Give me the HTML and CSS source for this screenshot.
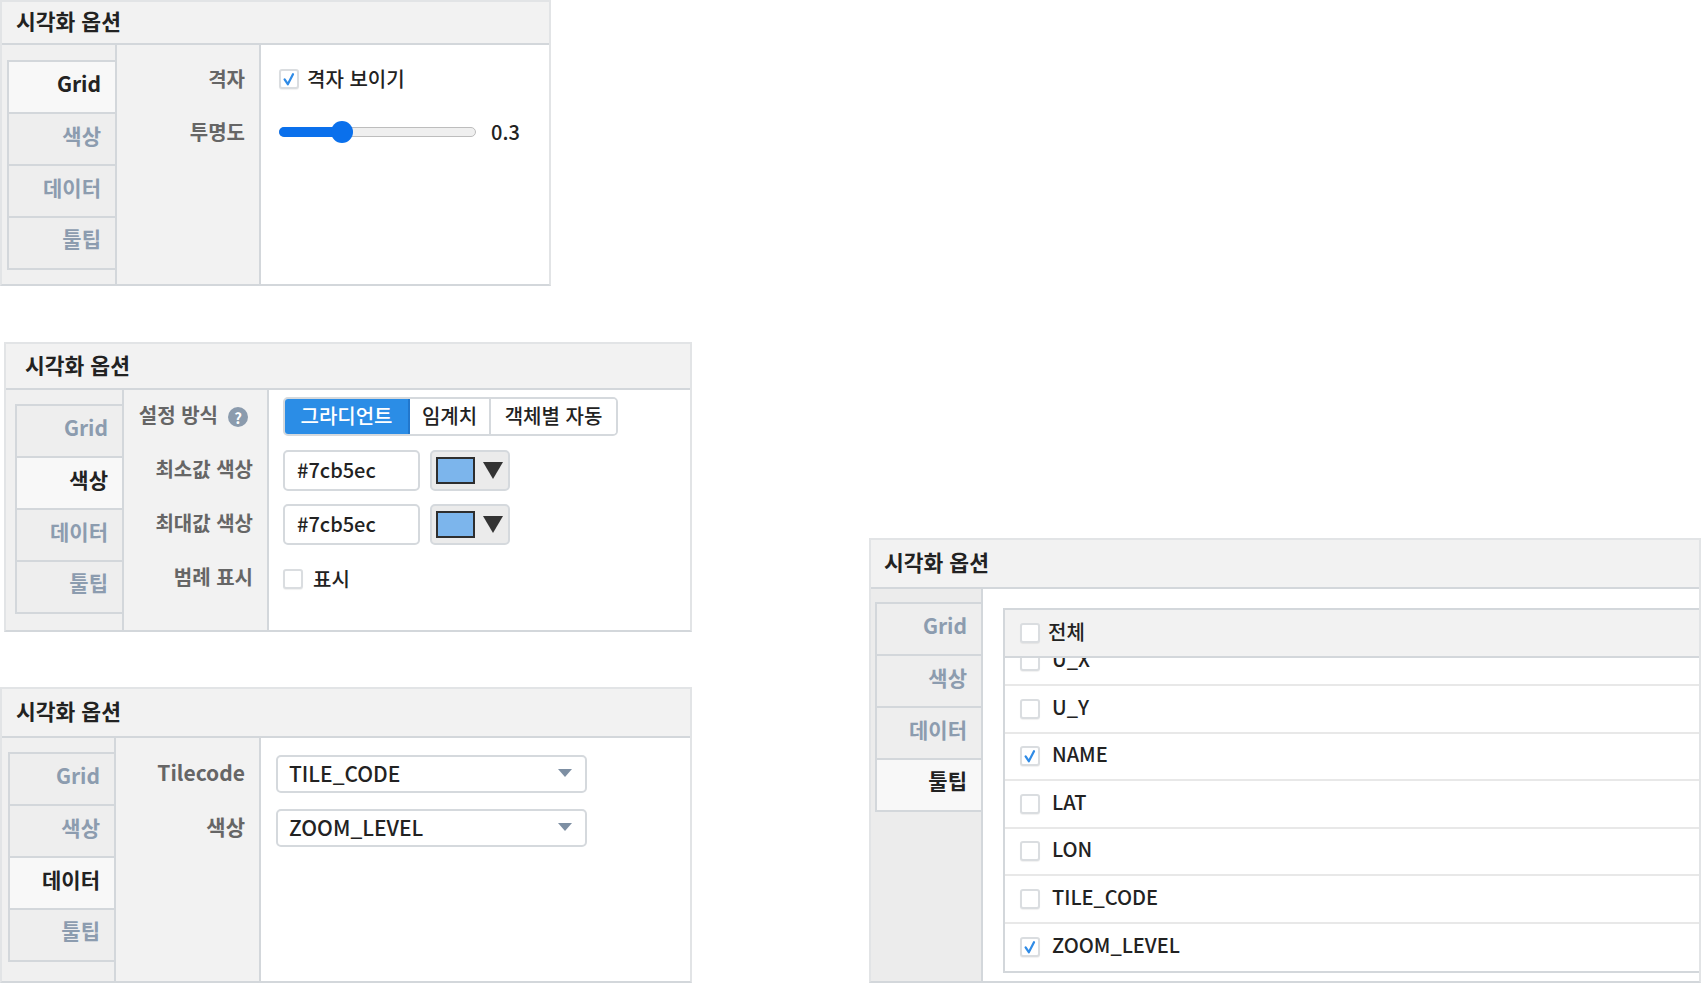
FILE: index.html
```html
<!DOCTYPE html>
<html lang="ko">
<head>
<meta charset="utf-8">
<title>시각화 옵션</title>
<link rel="stylesheet" href="styles.css">
</head>
<body>
<div class="canvas">
  <div class="left-col">

    <section class="panel p1">
      <header class="panel-head">시각화 옵션</header>
      <div class="panel-body">
        <nav class="tabs">
          <div class="tab active">Grid</div>
          <div class="tab">색상</div>
          <div class="tab">데이터</div>
          <div class="tab">툴팁</div>
        </nav>
        <div class="labels">
          <div class="row label">격자</div>
          <div class="row label">투명도</div>
        </div>
        <div class="fields">
          <div class="row field">
            <span class="cb checked"><svg viewBox="0 0 20 20"><path d="M4.5 10.5 L8.5 16.5 L15 4"/></svg></span>
            <span class="txt">격자 보이기</span>
          </div>
          <div class="row field">
            <div class="slider"><div class="slider-fill"></div><div class="slider-thumb"></div></div>
            <span class="txt val">0.3</span>
          </div>
        </div>
      </div>
    </section>

    <section class="panel p2">
      <header class="panel-head">시각화 옵션</header>
      <div class="panel-body">
        <nav class="tabs">
          <div class="tab">Grid</div>
          <div class="tab active">색상</div>
          <div class="tab">데이터</div>
          <div class="tab">툴팁</div>
        </nav>
        <div class="labels">
          <div class="row label label-help">설정 방식<span class="help">?</span></div>
          <div class="row label">최소값 색상</div>
          <div class="row label">최대값 색상</div>
          <div class="row label">범례 표시</div>
        </div>
        <div class="fields">
          <div class="row field">
            <div class="seg">
              <span class="seg-btn on">그라디언트</span>
              <span class="seg-btn s2">임계치</span>
              <span class="seg-btn s3">객체별 자동</span>
            </div>
          </div>
          <div class="row field">
            <span class="hex">#7cb5ec</span>
            <span class="picker"><span class="swatch"></span><span class="tri"></span></span>
          </div>
          <div class="row field">
            <span class="hex">#7cb5ec</span>
            <span class="picker"><span class="swatch"></span><span class="tri"></span></span>
          </div>
          <div class="row field">
            <span class="cb"></span>
            <span class="txt">표시</span>
          </div>
        </div>
      </div>
    </section>

    <section class="panel p3">
      <header class="panel-head">시각화 옵션</header>
      <div class="panel-body">
        <nav class="tabs">
          <div class="tab">Grid</div>
          <div class="tab">색상</div>
          <div class="tab active">데이터</div>
          <div class="tab">툴팁</div>
        </nav>
        <div class="labels">
          <div class="row label">Tilecode</div>
          <div class="row label">색상</div>
        </div>
        <div class="fields">
          <div class="row field">
            <div class="select"><span>TILE_CODE</span><span class="sel-arrow"></span></div>
          </div>
          <div class="row field">
            <div class="select"><span>ZOOM_LEVEL</span><span class="sel-arrow"></span></div>
          </div>
        </div>
      </div>
    </section>

  </div>

  <div class="right-col">
    <section class="panel p4">
      <header class="panel-head">시각화 옵션</header>
      <div class="panel-body">
        <nav class="tabs">
          <div class="tab">Grid</div>
          <div class="tab">색상</div>
          <div class="tab">데이터</div>
          <div class="tab active">툴팁</div>
        </nav>
        <div class="list-wrap">
          <div class="tbl">
            <div class="tbl-head">
              <span class="cb"></span>
              <span class="txt">전체</span>
            </div>
            <div class="tbl-body">
              <div class="tbl-row first"><span class="cb"></span><span class="txt">U_X</span></div>
              <div class="tbl-row"><span class="cb"></span><span class="txt">U_Y</span></div>
              <div class="tbl-row"><span class="cb checked"><svg viewBox="0 0 20 20"><path d="M4.5 10.5 L8.5 16.5 L15 4"/></svg></span><span class="txt">NAME</span></div>
              <div class="tbl-row"><span class="cb"></span><span class="txt">LAT</span></div>
              <div class="tbl-row"><span class="cb"></span><span class="txt">LON</span></div>
              <div class="tbl-row"><span class="cb"></span><span class="txt">TILE_CODE</span></div>
              <div class="tbl-row last"><span class="cb checked"><svg viewBox="0 0 20 20"><path d="M4.5 10.5 L8.5 16.5 L15 4"/></svg></span><span class="txt">ZOOM_LEVEL</span></div>
            </div>
          </div>
        </div>
      </div>
    </section>
  </div>
</div>
</body>
</html>
```

FILE: styles.css
```css
* { box-sizing: border-box; }

html, body {
  margin: 0;
  padding: 0;
  background: #ffffff;
}

body {
  width: 1701px;
  height: 983px;
  overflow: hidden;
  font-family: "Noto Sans CJK KR", "Noto Sans", sans-serif;
  font-size: 20px;
  color: #222;
}

.canvas {
  display: flex;
  align-items: flex-start;
}

.left-col {
  display: flex;
  flex-direction: column;
  width: 692px;
}

.right-col {
  width: 832px;
  margin: 538px 0 0 177px;
}

/* ---------- panel ---------- */
.panel {
  display: flex;
  flex-direction: column;
  border: 2px solid #e2e4e6;
  border-bottom-color: #d3d7db;
  background: #fff;
  overflow: hidden;
}

.panel-head {
  display: flex;
  align-items: center;
  background: #f2f2f2;
  border-bottom: 2px solid #d3d7db;
  padding-left: 14px;
  padding-bottom: 3px;
  font-size: 21.5px;
  font-weight: 700;
  color: #222;
  line-height: 1;
  flex: none;
}

.panel-body {
  display: flex;
  flex: 1;
  min-height: 0;
}

.tabs {
  flex: none;
  background: #f0f0f0;
  border-right: 2px solid #d3d7db;
}

.tab {
  height: 52px;
  display: flex;
  align-items: center;
  justify-content: flex-end;
  padding-right: 14px;
  padding-bottom: 8px;
  border-top: 2px solid #d3d7db;
  border-left: 2px solid #d3d7db;
  background: #eeeeee;
  color: #8c9caf;
  font-weight: 700;
  font-size: 21px;
  line-height: 1;
}

.tab:last-child {
  height: 54px;
  padding-bottom: 10px;
  border-bottom: 2px solid #d3d7db;
}

.tab.active {
  background: #f8f8f8;
  color: #222;
}

.labels {
  flex: none;
  background: #f2f2f2;
  border-right: 2px solid #d3d7db;
  display: flex;
  flex-direction: column;
}

.fields {
  flex: 1;
  display: flex;
  flex-direction: column;
  background: #fff;
}

.row {
  display: flex;
  align-items: center;
  flex: none;
}

.label {
  justify-content: flex-end;
  padding-right: 14px;
  color: #666;
  font-weight: 700;
  font-size: 20px;
  line-height: 1;
}

.field {
  gap: 8px;
}

.txt {
  font-size: 20px;
  font-weight: 500;
  line-height: 1;
  color: #222;
}

/* ---------- checkbox ---------- */
.cb {
  flex: none;
  width: 20px;
  height: 20px;
  border: 2px solid #dadde0;
  border-radius: 3px;
  background: #fff;
  box-shadow: 0 1px 1px rgba(0, 0, 0, 0.06);
  display: flex;
}

.cb svg {
  width: 100%;
  height: 100%;
  fill: none;
  stroke: #2f8be6;
  stroke-width: 2.8;
  stroke-linecap: round;
  stroke-linejoin: round;
}

/* ---------- panel 1 ---------- */
.p1 { width: 551px; height: 286px; }
.p1 .panel-head { height: 43px; padding-left: 14px; }
.p1 .tabs { width: 115px; padding: 15px 0 0 5px; }
.p1 .labels { width: 144px; padding-top: 14px; gap: 13px; }
.p1 .fields { padding: 14px 0 0 18px; gap: 13px; }
.p1 .row { height: 40px; }

.slider {
  position: relative;
  width: 197px;
  height: 10px;
  border: 1px solid #bdbdbd;
  border-radius: 6px;
  background: #efefef;
  margin-right: 7px;
}

.slider-fill {
  width: 63px;
  height: 10px;
  margin: -1px 0 0 -1px;
  border-radius: 6px;
  background: #0a70ec;
}

.slider-thumb {
  position: absolute;
  left: 51px;
  top: 50%;
  width: 22px;
  height: 22px;
  margin-top: -11px;
  border-radius: 50%;
  background: #0a70ec;
}

/* ---------- panel 2 ---------- */
.p2 { width: 688px; height: 290px; margin: 56px 0 0 4px; }
.p2 .panel-head { height: 46px; padding-left: 19px; }
.p2 .tabs { width: 118px; padding: 14px 0 0 9px; }
.p2 .labels { width: 145px; padding-top: 6px; gap: 13px; }
.p2 .fields { padding: 6px 0 0 14px; gap: 13px; }
.p2 .row { height: 41px; }
.p2 .field { gap: 10px; }
.p2 .label { padding-bottom: 3px; }

.label-help { padding-right: 19px; }

.help {
  width: 20px;
  height: 20px;
  border-radius: 50%;
  background: #8b9bad;
  color: #fff;
  font-size: 15px;
  font-weight: 700;
  display: flex;
  align-items: center;
  justify-content: center;
  margin: 4px 0 0 10px;
  line-height: 1;
}

.seg {
  display: flex;
  height: 39px;
  border: 2px solid #d5d9dd;
  border-radius: 5px;
  overflow: hidden;
}

.seg-btn {
  display: flex;
  align-items: center;
  justify-content: center;
  padding-bottom: 2px;
  font-size: 20px;
  font-weight: 500;
  line-height: 1;
  color: #222;
  background: #fff;
}

.seg-btn.on {
  width: 123px;
  background: #2b8de6;
  color: #fff;
}

.seg-btn.s2 {
  width: 83px;
  border-left: 2px solid #2277cc;
  border-right: 2px solid #d5d9dd;
}

.seg-btn.s3 { width: 125px; }

.hex {
  width: 137px;
  height: 41px;
  border: 2px solid #d5d9dd;
  border-radius: 5px;
  display: flex;
  align-items: center;
  padding: 0 0 2px 12px;
  font-size: 20px;
  font-weight: 500;
  line-height: 1;
  color: #222;
}

.picker {
  width: 80px;
  height: 41px;
  border: 2px solid #d5d9dd;
  border-radius: 5px;
  background: #ebebeb;
  display: flex;
  align-items: center;
  padding-left: 4px;
  gap: 8px;
}

.swatch {
  width: 39px;
  height: 27px;
  border: 2px solid #2e2e2e;
  background: #7cb5ec;
}

.tri {
  width: 0;
  height: 0;
  border-left: 10px solid transparent;
  border-right: 10px solid transparent;
  border-top: 17px solid #333;
}

/* ---------- panel 3 ---------- */
.p3 { width: 692px; height: 296px; margin-top: 55px; }
.p3 .panel-head { height: 49px; padding-left: 14px; }
.p3 .tabs { width: 114px; padding: 14px 0 0 6px; }
.p3 .labels { width: 145px; padding-top: 17px; gap: 16px; }
.p3 .fields { padding: 17px 0 0 15px; gap: 16px; }
.p3 .row { height: 38px; }
.p3 .label { font-size: 21px; padding-bottom: 4px; }

.select {
  width: 311px;
  height: 38px;
  border: 2px solid #d5d9dd;
  border-radius: 5px;
  display: flex;
  align-items: center;
  justify-content: space-between;
  padding: 0 13px 2px 11px;
  font-size: 21px;
  font-weight: 500;
  line-height: 1;
  color: #222;
}

.sel-arrow {
  width: 0;
  height: 0;
  border-left: 7px solid transparent;
  border-right: 7px solid transparent;
  border-top: 8px solid #7d8fa3;
}

/* ---------- panel 4 ---------- */
.p4 { width: 832px; height: 445px; }
.p4 .panel-head { height: 49px; padding-left: 13px; }
.p4 .tabs { width: 112px; padding: 13px 0 0 4px; background: #ececec; }

.list-wrap {
  flex: 1;
  padding: 19px 0 0 20px;
  background: #fff;
}

.tbl {
  border-top: 2px solid #d3d7db;
  border-left: 2px solid #d3d7db;
}

.tbl-head {
  height: 48px;
  display: flex;
  align-items: center;
  gap: 8px;
  padding-left: 15px;
  background: #f2f2f2;
  border-bottom: 2px solid #d3d7db;
}

.tbl-head .txt { padding-bottom: 3px; }

.tbl-body {
  height: 315px;
  overflow: hidden;
  border-bottom: 2px solid #d3d7db;
}

.tbl-row {
  height: 47.5px;
  display: flex;
  align-items: center;
  gap: 12px;
  padding-left: 15px;
  border-bottom: 2px solid #e8e8e8;
}

.tbl-row .txt { padding-bottom: 4px; }

.tbl-row.first { margin-top: -19.5px; }
.tbl-row.last { border-bottom: none; }
```
